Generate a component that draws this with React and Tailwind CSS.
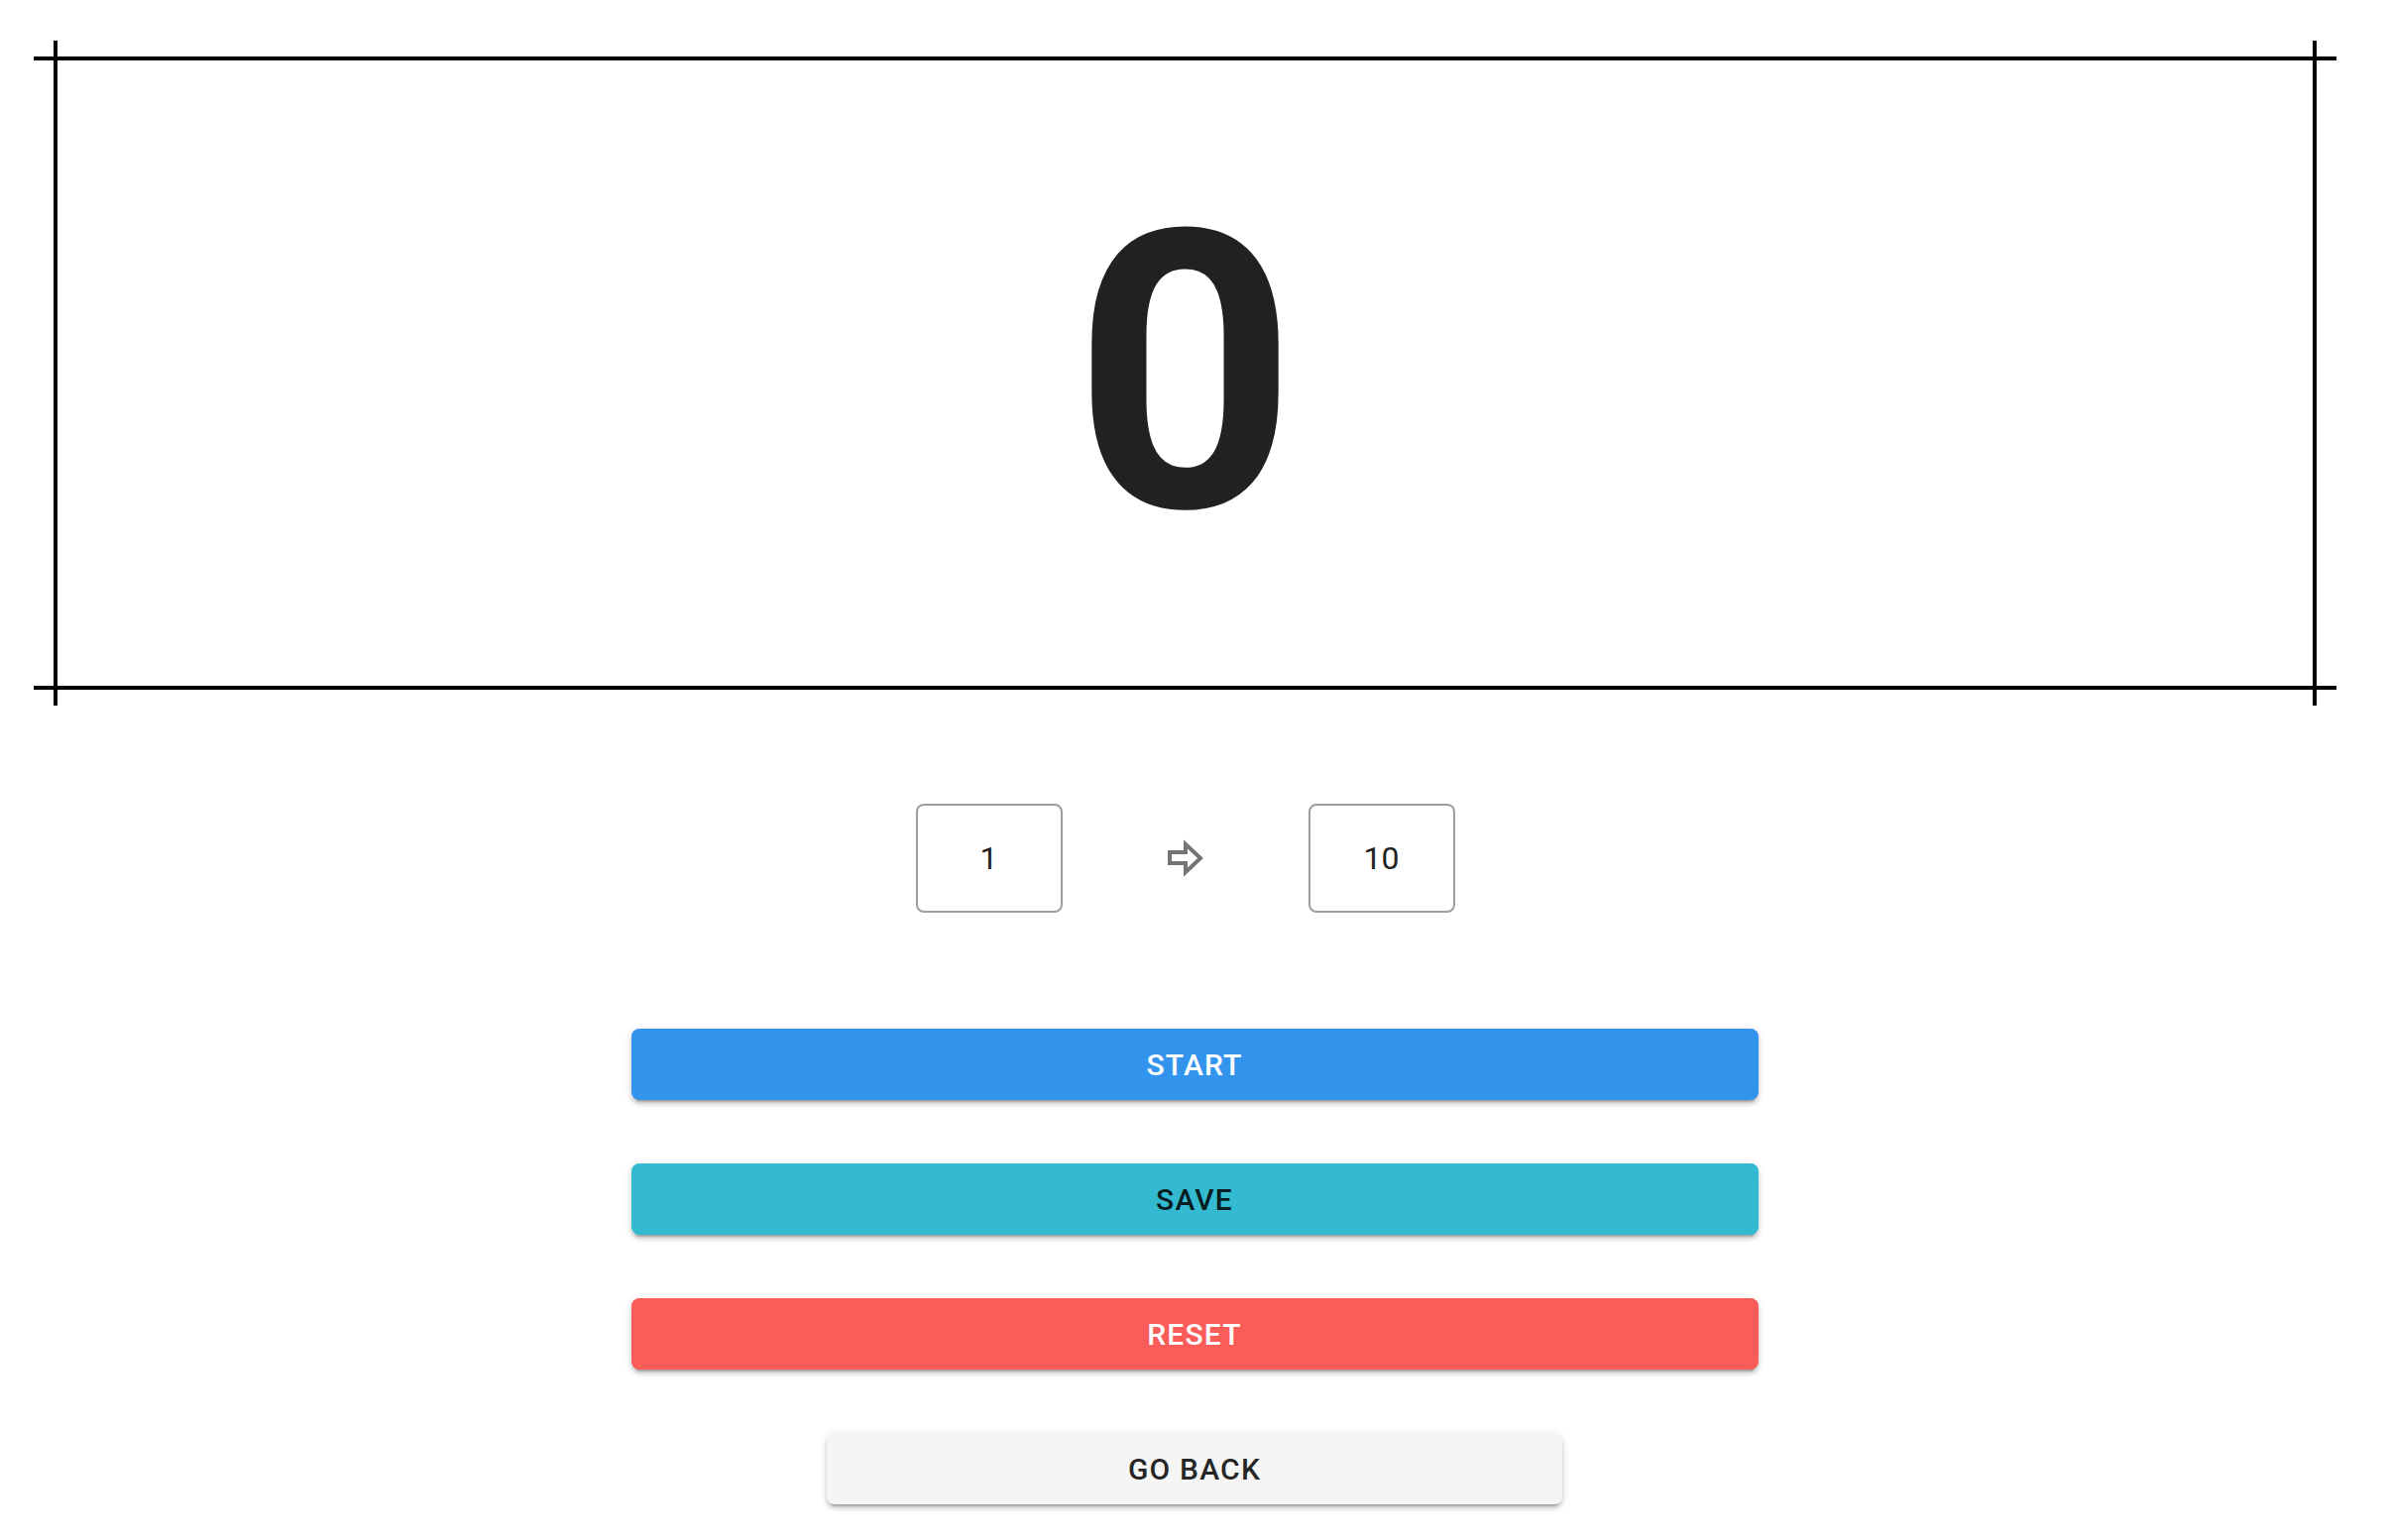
import React from 'react'

const btnShadow =
  'shadow-[0_6px_2px_-4px_rgba(0,0,0,0.2),0_4px_4px_0_rgba(0,0,0,0.14),0_2px_10px_0_rgba(0,0,0,0.12)]'

const ArrowIcon = () => (
  <svg width="40" height="42" viewBox="0 0 40 42" fill="none">
    <polygon
      points="4,15 20,15 20,6.8 35,21 20,35.2 20,26 4,26"
      stroke="#757575"
      strokeWidth="4"
      strokeLinejoin="miter"
    />
  </svg>
)

const NumberBox = ({ value }) => (
  <div className="w-[148px] h-[110px] flex items-center justify-center border-2 border-[#9e9e9e] rounded-[8px] text-[32px] text-[#212121]">
    {value}
  </div>
)

const App = () => {
  const buttons = [
    { label: 'START', cls: 'w-[1137px] bg-[#3394ee] text-white' },
    { label: 'SAVE', cls: 'w-[1137px] bg-[#33bad1] text-[rgba(0,0,0,0.87)]' },
    { label: 'RESET', cls: 'w-[1137px] bg-[#f95c59] text-white' },
    { label: 'GO BACK', cls: 'w-[742px] bg-[#f5f5f5] text-[rgba(0,0,0,0.87)]' },
  ]

  return (
    <div className="min-h-screen bg-white font-['Roboto',sans-serif]">
      <div className="pl-[54px] pr-[73px] pt-[57px]">
        {/* counter frame */}
        <div className="relative h-[639px] flex items-center justify-center">
          <div className="absolute top-0 left-[-20px] right-[-20px] h-[4px] bg-black" />
          <div className="absolute bottom-0 left-[-20px] right-[-20px] h-[4px] bg-black" />
          <div className="absolute left-0 top-[-16px] bottom-[-16px] w-[4px] bg-black" />
          <div className="absolute right-0 top-[-16px] bottom-[-16px] w-[4px] bg-black" />
          <span className="text-[392px] font-bold leading-none text-[#212121]">0</span>
        </div>

        <div className="mt-[115px] flex items-center justify-center gap-[104px]">
          <NumberBox value="1" />
          <ArrowIcon />
          <NumberBox value="10" />
        </div>
      </div>

      <div className="mt-[117px] flex flex-col items-center gap-16 pb-8">
        {buttons.map((b) => (
          <button
            key={b.label}
            className={`h-[72px] rounded-[8px] text-[30px] font-medium tracking-[1.2px] ${btnShadow} ${b.cls}`}
          >
            {b.label}
          </button>
        ))}
      </div>
    </div>
  )
}

export default App
